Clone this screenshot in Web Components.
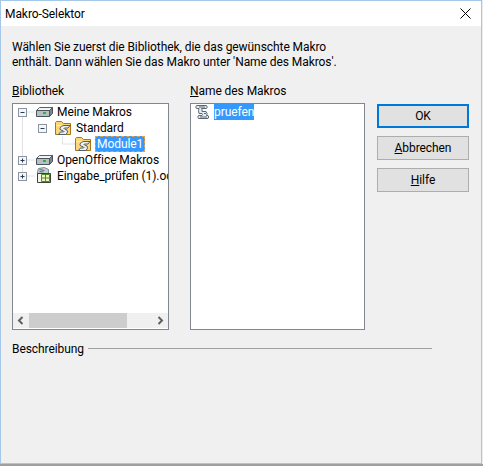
<!DOCTYPE html>
<html>
<head>
<meta charset="utf-8">
<title>Makro-Selektor</title>
<style>
  html, body { margin: 0; height: 100%; }
  body { font: 12px Roboto, sans-serif; letter-spacing: -0.07px; color: #000; overflow: hidden;
         background: linear-gradient(#ececec 464px, #a0a0a0 464px); }
</style>
</head>
<body>

<macro-dialog>
  <dialog-title slot="title">Makro-Selektor</dialog-title>
  <p slot="intro">Wählen Sie zuerst die Bibliothek, die das gewünschte Makro<br>enthält. Dann wählen Sie das Makro unter 'Name des Makros'.</p>
  <span slot="lib-label"><u>B</u>ibliothek</span>
  <tree-list slot="tree">
    <tree-row icon="drive" lines="M9.5 8V16M14 8H22" box="minus" boxx="5">Meine Makros</tree-row>
    <tree-row icon="folder" lines="M9.5 0V16" box="minus" boxx="25" gutter="42" style="--gap:3px">Standard</tree-row>
    <tree-row icon="folder" lines="M9.5 0V16M49.5 0V8H62" gutter="62" selected>Module1</tree-row>
    <tree-row icon="drive" lines="M9.5 0V16M14 8H22" box="plus" boxx="5">OpenOffice Makros</tree-row>
    <tree-row icon="calc" lines="M9.5 0V8M14 8H22" box="plus" boxx="5">Eingabe_prüfen (1).ods</tree-row>
  </tree-list>
  <span slot="macro-label"><u>N</u>ame des Makros</span>
  <macro-list slot="macros"><macro-item>pruefen</macro-item></macro-list>
  <push-button slot="buttons" default>OK</push-button>
  <push-button slot="buttons"><u>A</u>bbrechen</push-button>
  <push-button slot="buttons"><u>H</u>ilfe</push-button>
  <span slot="description">Beschreibung</span>
</macro-dialog>

<script>
class MacroDialog extends HTMLElement {
  constructor() {
    super();
    this.attachShadow({ mode: "open" });
    this.shadowRoot.innerHTML = `
    <style>
      :host { display: flex; flex-direction: column; width: 480px; height: 462px; background: #f0f0f0;
              border: 1px solid #a6c8e8; }
      .body { flex: 1; display: flex; flex-direction: column; padding: 14px 11px 0; }
      .intro ::slotted(p) { margin: 0; line-height: 15px; }
      .intro { height: 37px; }
      .cols { display: flex; margin-top: 3px; }
      .col { display: flex; flex-direction: column; }
      .col.lib { width: 178px; }
      .col.mac { width: 187px; }
      .label { height: 21px; line-height: 18px; margin-top: 2px; }
      .btns { display: flex; flex-direction: column; gap: 8px; padding-top: 24px; }
      .desc { display: flex; align-items: center; gap: 4px; margin-top: 10px; width: 420px; height: 18px; }
      .desc i { flex: 1; height: 1px; background: #a0a0a0; margin-top: -2px; }
    </style>
    <slot name="title"></slot>
    <div class="body">
      <div class="intro"><slot name="intro"></slot></div>
      <div class="cols">
        <div class="col lib"><div class="label"><slot name="lib-label"></slot></div><slot name="tree"></slot></div>
        <div class="col mac"><div class="label"><slot name="macro-label"></slot></div><slot name="macros"></slot></div>
        <div class="btns"><slot name="buttons"></slot></div>
      </div>
      <div class="desc"><slot name="description"></slot><i></i></div>
    </div>`;
  }
}

class DialogTitle extends HTMLElement {
  constructor() {
    super();
    this.attachShadow({ mode: "open" });
    this.shadowRoot.innerHTML = `
    <style>
      :host { display: flex; align-items: center; justify-content: space-between; height: 25px; background: #fff;
              padding: 0 10px 0 4px; }
      svg { display: block; }
    </style>
    <span><slot></slot></span>
    <svg width="11" height="11" viewBox="0 0 11 11"><path d="M.5 .5L10.5 10.5M10.5 .5L.5 10.5" stroke="#000" fill="none"/></svg>`;
  }
}

const ICONS = {
  drive: `<svg width="18" height="16" viewBox="0 0 18 16">
    <path d="M1.5 6.5L4.5 3.5H17.5L14.5 6.5Z" fill="#f2f4f5" stroke="#55606a"/>
    <path d="M1.5 6.5H14.5V12.5H1.5Z" fill="#b8bec3" stroke="#4a545c"/>
    <path d="M14.5 6.5L17.5 3.5V9.5L14.5 12.5Z" fill="#7c868e" stroke="#4a545c"/>
    <rect x="8" y="8" width="3" height="2" fill="#18c038"/></svg>`,
  folder: `<svg width="18" height="16" viewBox="0 0 18 16">
    <path d="M.5 14.5V2.5L1.5 1.5H6.5L8.5 3.5H15.5V14.5Z" fill="#fbd67a" stroke="#a8741a"/>
    <path d="M1.5 5.5H14.5" stroke="#fff2c4" fill="none"/>
    <path d="M5 8Q6 5.5 9 5.5H15L13 8H9.5Q8.5 8.5 9.5 9L12 10Q13.5 12 11 14.5H3.5L5.5 12H8.5Q9.5 11.5 8.5 11L6 10Q4.5 9.5 5 8Z" fill="#eef1f4" stroke="#4f5f6e"/></svg>`,
  calc: `<svg width="18" height="18" viewBox="0 0 18 18" style="margin-top:-2px">
    <path d="M2.5 5.5L3.5 2.5L9.5 1.5L13.5 3.5V7.5H2.5Z" fill="#c2ccd6" stroke="#7c8893"/>
    <path d="M4.5 3.5L9.5 4.5M4.5 5.5L8.5 6" stroke="#5f6d7a" fill="none"/>
    <path d="M2.5 7.5H15.5V16.5H2.5Z" fill="#f4f6f0" stroke="#39453a"/>
    <path d="M6.5 8.5H14.5V15.5H6.5Z" fill="#eef5b8" stroke="#4e8a1e"/>
    <path d="M10.5 8.5V15.5M6.5 12H14.5" stroke="#4e8a1e" fill="none"/></svg>`
};

class TreeList extends HTMLElement {
  constructor() {
    super();
    this.attachShadow({ mode: "open" });
    this.shadowRoot.innerHTML = `
    <style>
      :host { display: flex; flex-direction: column; box-sizing: border-box; width: 157px; height: 227px;
              background: #fff; border: 1px solid #82878f; overflow: hidden; }
      .rows { flex: 1; overflow: hidden; }
      .bar { display: flex; align-items: center; justify-content: space-between; height: 15px; background: #f0f0f0; margin-bottom: 1px; }
      .thumb { width: 98px; height: 15px; background: #cdcdcd; margin-right: auto; }
      svg { display: block; flex: none; }
    </style>
    <div class="rows"><slot></slot></div>
    <div class="bar">
      <svg width="16" height="15" viewBox="0 0 16 15"><path d="M9.5 4L6 7.5L9.5 11" stroke="#606060" stroke-width="2" fill="none"/></svg>
      <div class="thumb"></div>
      <svg width="16" height="15" viewBox="0 0 16 15"><path d="M6.5 4L10 7.5L6.5 11" stroke="#606060" stroke-width="2" fill="none"/></svg>
    </div>`;
  }
}

class TreeRow extends HTMLElement {
  connectedCallback() {
    this.attachShadow({ mode: "open" });
    const box = this.getAttribute("box");
    const x = Number(this.getAttribute("boxx") || 0);
    const gutter = Number(this.getAttribute("gutter") || 22);
    let boxSvg = "";
    if (box) {
      boxSvg = `<rect x="${x + .5}" y="4.5" width="8" height="8" fill="#f4f6f8" stroke="#8a93a0"/>
        <path d="M${x + 2.5} 8.5H${x + 6.5}${box === "plus" ? `M${x + 4.5} 6.5V10.5` : ""}" stroke="#2a3a52" fill="none"/>`;
    }
    this.shadowRoot.innerHTML = `
    <style>
      :host { display: flex; height: 16px; white-space: nowrap; }
      svg { display: block; flex: none; }
      .icon { width: 18px; flex: none; margin-right: var(--gap, 4px); height: 16px; }
      .text { line-height: 17px; }
      :host([selected]) .text { background: #3399ff; color: #fff; outline: 1px dashed #e8a050; outline-offset: -1px; padding: 0 2px; height: 16px; margin-left: -2px; }
    </style>
    <svg width="${gutter}" height="16" viewBox="0 0 ${gutter} 16">
      <path d="${this.getAttribute("lines")}" stroke="#e2e2e2" fill="none"/>${boxSvg}
    </svg>
    <div class="icon">${ICONS[this.getAttribute("icon")]}</div>
    <span class="text"><slot></slot></span>`;
  }
}

class MacroList extends HTMLElement {
  constructor() {
    super();
    this.attachShadow({ mode: "open" });
    this.shadowRoot.innerHTML = `
    <style>
      :host { display: block; box-sizing: border-box; width: 175px; height: 227px; background: #fff; border: 1px solid #82878f; padding: 0 0 0 3px; }
    </style>
    <slot></slot>`;
  }
}

class MacroItem extends HTMLElement {
  constructor() {
    super();
    this.attachShadow({ mode: "open" });
    this.shadowRoot.innerHTML = `
    <style>
      :host { display: flex; align-items: center; height: 16px; gap: 3px; }
      svg { display: block; flex: none; }
      span { background: #3399ff; color: #fff; line-height: 17px; height: 16px; }
    </style>
    <svg width="17" height="16" viewBox="0 0 17 16">
      <path d="M2.5 1.5H12.5Q14 3 12.5 4.5H7.5Q8.5 6 8 7.5H12Q14 9.5 12.5 11.5H14Q15.5 13 14 14.5H4.5Q3 13 4.5 11.5H8Q9 10.5 8 9.5H5Q4 6.5 5 4.5H2.5Q1 3 2.5 1.5Z" fill="#e8ecef" stroke="#5a6874"/>
      <path d="M5 3H11M10 9.5H12M6 13H13" stroke="#5a6874" fill="none"/>
    </svg>
    <span><slot></slot></span>`;
  }
}

class PushButton extends HTMLElement {
  constructor() {
    super();
    this.attachShadow({ mode: "open" });
    this.shadowRoot.innerHTML = `
    <style>
      :host { display: flex; align-items: center; justify-content: center; box-sizing: border-box; width: 92px; height: 24px;
              background: #e1e1e1; border: 1px solid #adadad; }
      :host([default]) { border: 2px solid #0078d7; }
    </style>
    <span><slot></slot></span>`;
  }
}

customElements.define("macro-dialog", MacroDialog);
customElements.define("dialog-title", DialogTitle);
customElements.define("tree-list", TreeList);
customElements.define("tree-row", TreeRow);
customElements.define("macro-list", MacroList);
customElements.define("macro-item", MacroItem);
customElements.define("push-button", PushButton);
</script>
</body>
</html>
